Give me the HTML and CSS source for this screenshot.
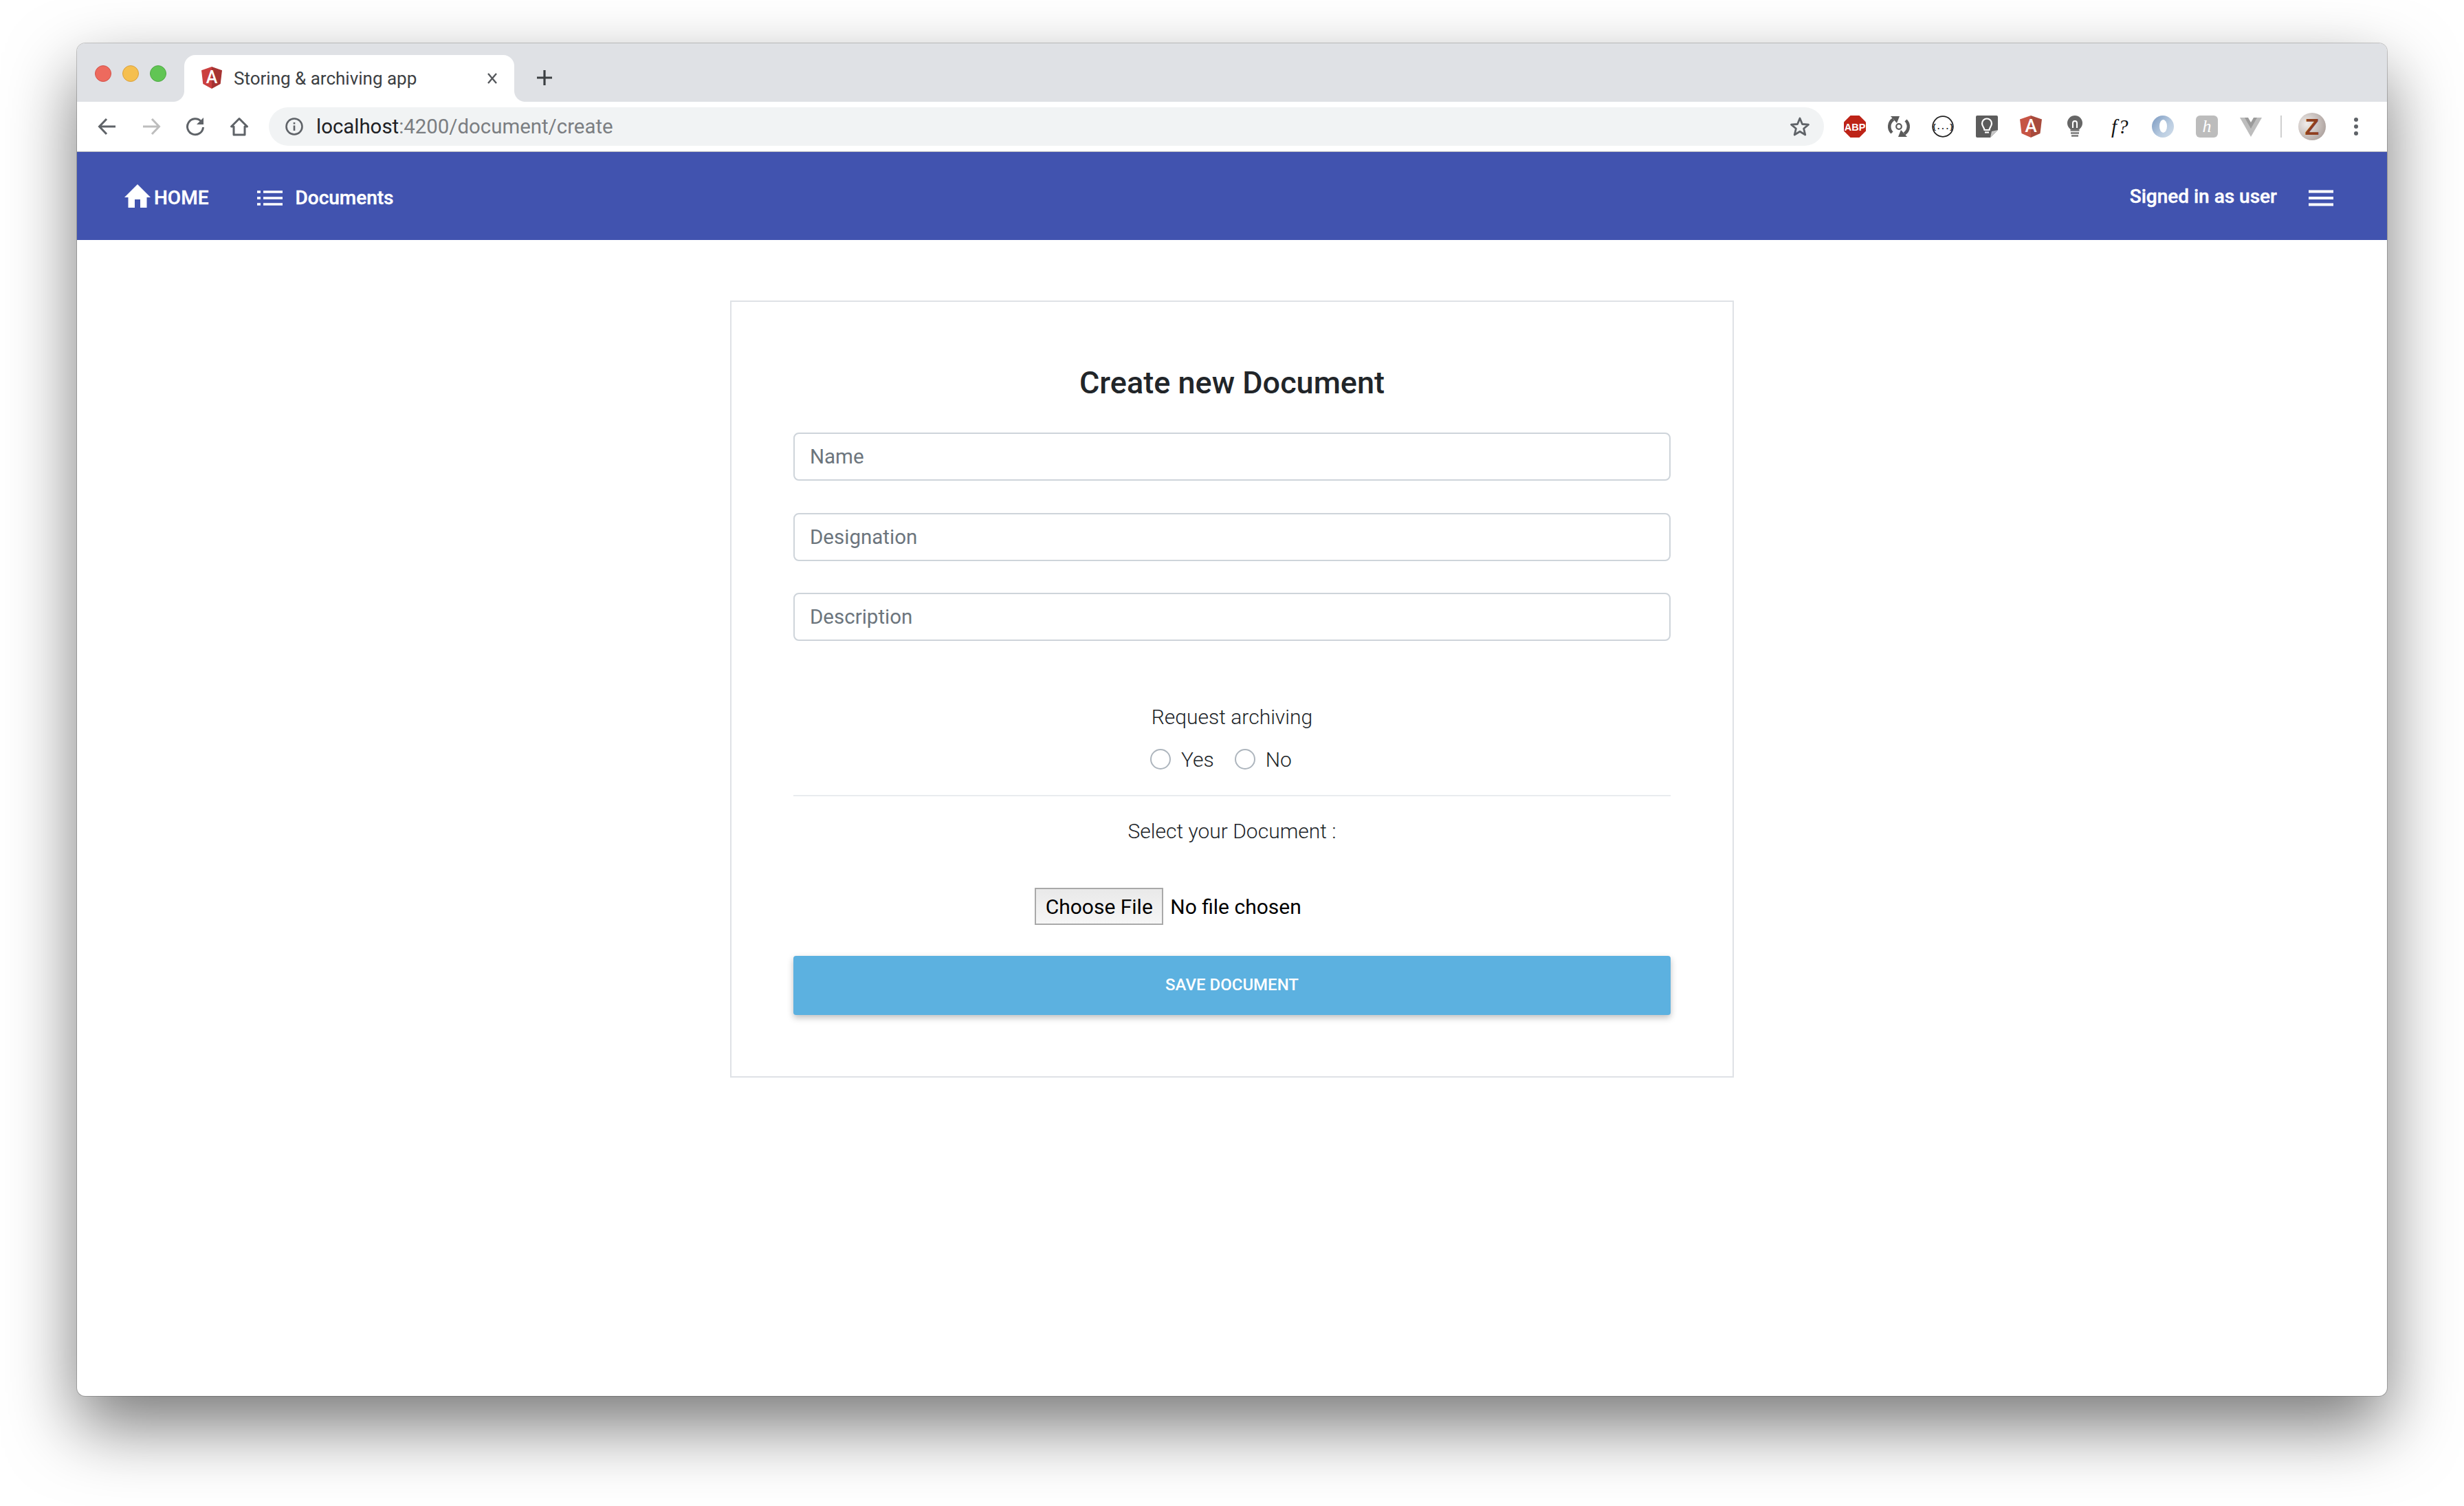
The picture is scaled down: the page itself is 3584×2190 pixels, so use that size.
FILE: index.html
```html
<!DOCTYPE html>
<html lang="en">
<head>
    <meta charset="UTF-8">
    <title>Storing &amp; archiving app</title>
    <link rel="stylesheet" href="styles.css">
</head>
<body>
    <div class="window">
        <!-- Browser tabs -->
        <div class="tab-strip">
            <div class="lights">
                <span class="light light-red"></span>
                <span class="light light-yellow"></span>
                <span class="light light-green"></span>
            </div>
            <div class="tab">
                <svg class="tab-logo" viewBox="0 0 30 32">
                    <polygon points="15,0 30,5.2 27.7,25 15,32" fill="#a63332"/>
                    <polygon points="15,0 0,5.2 2.3,25 15,32" fill="#cb3f3f"/>
                    <text x="15" y="24" class="logo-letter">A</text>
                </svg>
                <span class="tab-title">Storing &amp; archiving app</span>
                <svg class="tab-close" viewBox="0 0 16 16"><path d="M2 1 14 15M14 1 2 15" stroke="#55585c" stroke-width="2.4" fill="none"/></svg>
            </div>
            <svg class="tab-new" viewBox="0 0 24 24"><path d="M12 1V23M1 12H23" stroke="#3c4043" stroke-width="3.2" fill="none"/></svg>
        </div>

        <!-- Browser toolbar -->
        <div class="toolbar">
            <button class="tool">
                <svg viewBox="0 0 28 28"><path d="M26 14H3M13 3 2.5 14 13 25" stroke="#5f6368" stroke-width="3" fill="none"/></svg>
            </button>
            <button class="tool">
                <svg viewBox="0 0 28 28"><path d="M2 14H25M15 3 25.500 14 15 25" stroke="#bdbdbd" stroke-width="3" fill="none"/></svg>
            </button>
            <button class="tool">
                <svg viewBox="0 0 28 28"><path d="M22.500 6.500A11.500 11.500 0 1 0 25.500 15" stroke="#5f6368" stroke-width="3" fill="none"/><polygon points="26,1 26,11 16,11" fill="#5f6368"/></svg>
            </button>
            <button class="tool">
                <svg viewBox="0 0 28 28"><path d="M14 2.500 2.500 14H6V26H22V14H25.500Z" stroke="#5f6368" stroke-width="3" fill="none" stroke-linejoin="round"/></svg>
            </button>
            <div class="omnibox">
                <svg class="info-icon" viewBox="0 0 26 26">
                    <circle cx="13" cy="13" r="11.500" stroke="#5f6368" stroke-width="2.600" fill="none"/>
                    <path d="M13 11.500V19M13 7V9.500" stroke="#5f6368" stroke-width="2.600" fill="none"/>
                </svg>
                <span class="url"><span class="url-host">localhost</span>:4200/document/create</span>
                <svg class="star-icon" viewBox="0 0 30 30"><polygon points="15,3 18.500,11.500 27.500,12.200 20.600,18 22.800,27 15,22.200 7.200,27 9.400,18 2.500,12.200 11.500,11.500" stroke="#5f6368" stroke-width="2.800" fill="none" stroke-linejoin="round"/></svg>
            </div>
            <div class="extensions">
                <svg class="ext" viewBox="0 0 32 32">
                    <polygon points="9.500,0 22.500,0 32,9.500 32,22.500 22.500,32 9.500,32 0,22.500 0,9.500" fill="#bd2317"/>
                    <text x="16" y="21.500" class="abp-text">ABP</text>
                </svg>
                <svg class="ext" viewBox="0 0 32 32">
                    <path d="M6 25A12.500 12.500 0 0 1 8 5.500M26 7A12.500 12.500 0 0 1 24 26.500" stroke="#5b5b5b" stroke-width="4.500" fill="none"/>
                    <polygon points="4,1 17,1 13,11" fill="#5b5b5b"/>
                    <polygon points="28,31 15,31 19,21" fill="#5b5b5b"/>
                    <circle cx="16" cy="16" r="3.800" stroke="#5b5b5b" stroke-width="2.200" fill="none"/>
                </svg>
                <svg class="ext" viewBox="0 0 32 32">
                    <circle cx="16" cy="16" r="14.800" stroke="#222" stroke-width="1.800" fill="#fff"/>
                    <text x="16" y="20" class="json-text">{...}</text>
                </svg>
                <svg class="ext" viewBox="0 0 32 32">
                    <path d="M2 0H30A2 2 0 0 1 32 2V21L21 32H2A2 2 0 0 1 0 30V2A2 2 0 0 1 2 0Z" fill="#5c5c5c"/>
                    <polygon points="32,21 21,32 23,23" fill="#c7c7c7"/>
                    <path d="M12.500 21C12 17 9 15.500 9 11.500A7 7 0 0 1 23 11.500C23 15.500 20 17 19.500 21Z" stroke="#fff" stroke-width="2.200" fill="none"/>
                    <path d="M13 24.500H19" stroke="#fff" stroke-width="2.200"/>
                </svg>
                <svg class="ext" viewBox="0 0 32 32">
                    <polygon points="16,0 32,5.500 29.500,26 16,32" fill="#a84a3c"/>
                    <polygon points="16,0 0,5.500 2.500,26 16,32" fill="#c65444"/>
                    <text x="16" y="24" class="logo-letter ext-letter">A</text>
                </svg>
                <svg class="ext" viewBox="0 0 32 32">
                    <circle cx="16" cy="11" r="11" fill="#666"/>
                    <path d="M13 18V11A3 3 0 0 1 19 11V18" stroke="#fff" stroke-width="2" fill="none"/>
                    <path d="M9.500 21.500H22.500M10 25.500H22M11 29.500H21" stroke="#777" stroke-width="2.500"/>
                </svg>
                <svg class="ext" viewBox="0 0 32 32">
                    <text x="5" y="26" class="func-text">f?</text>
                </svg>
                <svg class="ext" viewBox="0 0 32 32">
                    <defs>
                        <linearGradient id="ring" x1="0" y1="0.100" x2="1" y2="0.900">
                            <stop offset="0" stop-color="#7f9dc3"/>
                            <stop offset="0.600" stop-color="#b8cbe0"/>
                            <stop offset="1" stop-color="#cfdcea"/>
                        </linearGradient>
                    </defs>
                    <circle cx="16" cy="16" r="16" fill="url(#ring)"/>
                    <ellipse cx="16.500" cy="15.500" rx="5.500" ry="9.500" fill="#fff"/>
                </svg>
                <svg class="ext" viewBox="0 0 32 32">
                    <rect width="32" height="32" rx="6" fill="#bcbcbc"/>
                    <text x="16" y="24" class="h-text">h</text>
                </svg>
                <svg class="ext" viewBox="0 0 32 32">
                    <polygon points="0,3 32,3 16,31" fill="#bdbdbd"/>
                    <polygon points="7,3 25,3 16,19" fill="#9b9b9b"/>
                    <polygon points="12,3 20,3 16,10" fill="#fff"/>
                </svg>
            </div>
            <span class="tool-sep"></span>
            <svg class="avatar" viewBox="0 0 40 40">
                <defs>
                    <radialGradient id="pearl" cx="0.3" cy="0.4" r="0.8">
                        <stop offset="0" stop-color="#f0ecea"/>
                        <stop offset="1" stop-color="#a89c98"/>
                    </radialGradient>
                </defs>
                <circle cx="20" cy="20" r="20" fill="url(#pearl)"/>
                <text x="20" y="32" class="avatar-text">Z</text>
            </svg>
            <span class="dots"><i></i><i></i><i></i></span>
        </div>

        <!-- App navbar -->
        <header class="navbar">
            <a class="nav-home" href="#">
                <svg class="home-icon" viewBox="0 0 38 34"><path d="M19 0 38 19H32.500V34H23V22H15V34H5.500V19H0Z" fill="#fff"/></svg>
                HOME
            </a>
            <a class="nav-docs" href="#">
                <svg class="list-icon" viewBox="0 0 37 24">
                    <path d="M0 3H5M9 3H37M0 12H5M9 12H37M0 21H5M9 21H37" stroke="#fff" stroke-width="3.400"/>
                </svg>
                Documents
            </a>
            <span class="nav-user">Signed in as user</span>
            <svg class="burger" viewBox="0 0 36 24"><path d="M0 2.500H36M0 12H36M0 21.500H36" stroke="#fff" stroke-width="4"/></svg>
        </header>

        <main>
            <section class="doc-card">
                <h2>Create new Document</h2>
                <input class="field" type="text" placeholder="Name">
                <input class="field" type="text" placeholder="Designation">
                <input class="field" type="text" placeholder="Description">

                <p class="form-label label-archiving">Request archiving</p>
                <div class="radio-row">
                    <label class="radio-item"><input type="radio" name="archiving"> Yes</label>
                    <label class="radio-item"><input type="radio" name="archiving"> No</label>
                </div>
                <hr class="divider">
                <p class="form-label label-select">Select your Document :</p>
                <div class="file-row">
                    <button class="file-button" type="button">Choose File</button>
                    <span class="file-name">No file chosen</span>
                </div>
                <button class="save-button" type="button">SAVE DOCUMENT</button>
            </section>
        </main>
    </div>
</body>
</html>
```

FILE: styles.css
```css
html, body {
    margin: 0;
    padding: 0;
}

body {
    background-color: #ffffff;
    font-family: Roboto, sans-serif;
    height: 2190px;
    overflow: hidden;
    padding: 63px 112px 0;
    box-sizing: border-box;
}

.window {
    height: 1967px;
    background-color: #ffffff;
    border-radius: 12px;
    box-shadow: 0 0 0 1px rgba(0, 0, 0, 0.2), 0 44px 100px rgba(0, 0, 0, 0.53);
}

/* tabs */
.tab-strip {
    height: 85px;
    background-color: #dfe1e5;
    border-radius: 12px 12px 0 0;
    display: flex;
    align-items: flex-end;
}

.lights {
    display: flex;
    gap: 16px;
    padding-left: 26px;
    align-self: flex-start;
    margin-top: 32px;
}

.light {
    width: 24px;
    height: 24px;
    border-radius: 50%;
    box-sizing: border-box;
}

.light-red { background-color: #ed6a5e; border: 1px solid #d4524a; }
.light-yellow { background-color: #f5bf4f; border: 1px solid #d9a03e; }
.light-green { background-color: #61c554; border: 1px solid #4fa944; }

.tab {
    position: relative;
    width: 480px;
    height: 68px;
    margin-left: 26px;
    background-color: #ffffff;
    border-radius: 16px 16px 0 0;
    display: flex;
    align-items: center;
    padding-left: 25px;
    box-sizing: border-box;
    color: #3c4043;
}

.tab::before,
.tab::after {
    content: "";
    position: absolute;
    bottom: 0;
    width: 16px;
    height: 16px;
}

.tab::before {
    left: -16px;
    background: radial-gradient(circle at 0 0, #dfe1e5 15.5px, #ffffff 16.5px);
}

.tab::after {
    right: -16px;
    background: radial-gradient(circle at 100% 0, #dfe1e5 15.5px, #ffffff 16.5px);
}

.tab-logo {
    width: 30px;
    height: 32px;
    margin-top: -2px;
}

.logo-letter {
    font-family: Roboto, sans-serif;
    font-size: 25px;
    font-weight: 500;
    fill: #ffffff;
    text-anchor: middle;
}

.ext-letter {
    font-size: 26px;
}

.tab-title {
    font-size: 26px;
    margin-left: 17px;
    width: 368px;
    white-space: nowrap;
}

.tab-close {
    width: 16px;
    height: 16px;
}

.tab-new {
    width: 24px;
    height: 24px;
    margin: 0 0 23px 32px;
}

/* toolbar */
.toolbar {
    height: 73px;
    box-sizing: border-box;
    border-bottom: 1px solid #b9bbbe;
    padding-left: 12px;
    display: flex;
    align-items: center;
    background-color: #ffffff;
}

.tool {
    width: 64px;
    height: 40px;
    padding: 0;
    border: none;
    background: none;
    display: flex;
    align-items: center;
    justify-content: center;
}

.tool svg {
    width: 28px;
    height: 28px;
}

.omnibox {
    width: 2262px;
    height: 56px;
    margin-left: 11px;
    background-color: #f1f3f4;
    border-radius: 28px;
    display: flex;
    align-items: center;
    padding: 0 20px 0 24px;
    box-sizing: border-box;
    flex-shrink: 0;
}

.info-icon {
    width: 26px;
    height: 26px;
}

.url {
    font-size: 29.400px;
    color: #7b7e82;
    margin-left: 19px;
    flex: 1;
}

.url-host {
    color: #202124;
}

.star-icon {
    width: 30px;
    height: 30px;
}

.extensions {
    display: flex;
    gap: 32px;
    margin-left: 29px;
}

.ext {
    width: 32px;
    height: 32px;
    flex-shrink: 0;
    overflow: visible;
}

.abp-text {
    font-family: "Liberation Sans", sans-serif;
    font-size: 14.500px;
    font-weight: 700;
    fill: #ffffff;
    text-anchor: middle;
}

.json-text {
    font-family: "DejaVu Sans Mono", monospace;
    font-size: 10.500px;
    font-weight: 700;
    fill: #222222;
    text-anchor: middle;
}

.func-text {
    font-family: "Liberation Serif", serif;
    font-size: 29px;
    font-style: italic;
    letter-spacing: 2px;
    fill: #111111;
}

.h-text {
    font-family: "Liberation Serif", serif;
    font-size: 26px;
    font-style: italic;
    fill: #ffffff;
    text-anchor: middle;
}

.tool-sep {
    width: 2px;
    height: 32px;
    margin-left: 27px;
    background-color: #cfcfcf;
}

.avatar {
    width: 40px;
    height: 40px;
    margin-left: 24px;
}

.avatar-text {
    font-family: "Liberation Sans", sans-serif;
    font-size: 34px;
    font-weight: 700;
    fill: #8f3f1f;
    text-anchor: middle;
}

.dots {
    width: 16px;
    margin-left: 36px;
    display: flex;
    flex-direction: column;
    align-items: center;
    gap: 4px;
}

.dots i {
    width: 6px;
    height: 6px;
    border-radius: 50%;
    background-color: #5f6368;
}

/* app navbar */
.navbar {
    height: 128px;
    box-sizing: border-box;
    padding: 5px 0 0 69px;
    background-color: #4153af;
    display: flex;
    align-items: center;
    color: #ffffff;
    font-size: 28px;
    font-weight: 500;
    -webkit-text-stroke: 0.4px #ffffff;
}

.navbar a {
    color: #ffffff;
    text-decoration: none;
    display: flex;
    align-items: center;
}

.home-icon {
    width: 38px;
    height: 34px;
    margin: -6px 5px 0 0;
}

.nav-docs {
    margin-left: 71px;
}

.list-icon {
    width: 37px;
    height: 24px;
    margin-right: 18px;
}

.nav-user {
    margin-left: auto;
    margin-top: -4px;
}

.burger {
    width: 36px;
    height: 24px;
    margin: 0 78px 0 46px;
}

/* form card */
.doc-card {
    width: 1460px;
    margin: 88px auto 0;
    box-sizing: border-box;
    border: 2px solid #dfe2e6;
    padding: 88px 90px 89px;
    color: #212529;
    text-align: center;
}

h2 {
    margin: 0 0 42px;
    font-size: 45px;
    line-height: 60px;
    font-weight: 500;
}

.field {
    display: block;
    width: 100%;
    height: 70px;
    margin-bottom: 46.500px;
    box-sizing: border-box;
    border: 2px solid #ced4da;
    border-radius: 8px;
    padding: 0 22px;
    font-family: Roboto, sans-serif;
    font-size: 29.500px;
    background-color: #ffffff;
}

.field::placeholder {
    color: #6c757d;
    opacity: 1;
}

.form-label {
    margin: 0;
    font-size: 30px;
    line-height: 40px;
    font-weight: 300;
}

.label-archiving {
    margin-top: 91px;
}

.radio-row {
    height: 40px;
    margin-top: 21px;
    padding-right: 32px;
    display: flex;
    justify-content: center;
    gap: 30px;
    font-size: 30px;
    font-weight: 300;
}

.radio-item {
    display: flex;
    align-items: center;
    gap: 15px;
}

.radio-item input {
    appearance: none;
    width: 30px;
    height: 30px;
    margin: 0;
    border: 2px solid #adb5bd;
    border-radius: 50%;
    background-color: #ffffff;
}

.divider {
    border: none;
    height: 2px;
    background-color: #e9ecef;
    margin: 32px 0 31px;
}

.file-row {
    display: flex;
    justify-content: center;
    align-items: center;
    margin: 62px 0 45px;
    padding-right: 186px;
    color: #000000;
    font-size: 30px;
}

.file-button {
    width: 187px;
    height: 54px;
    padding: 0;
    box-sizing: border-box;
    border: 2px solid #a9a9a9;
    background: linear-gradient(#e9e9e9, #f6f6f6);
    font-family: Roboto, sans-serif;
    font-size: 30px;
    color: #000000;
}

.file-name {
    margin-left: 10px;
}

.save-button {
    display: block;
    width: 100%;
    height: 86px;
    padding: 0 0 2px;
    border: none;
    border-radius: 4px;
    background-color: #5cb1e0;
    box-shadow: 0 4px 10px rgba(0, 0, 0, 0.25);
    color: #ffffff;
    font-family: Roboto, sans-serif;
    font-size: 24px;
    font-weight: 500;
}
```
